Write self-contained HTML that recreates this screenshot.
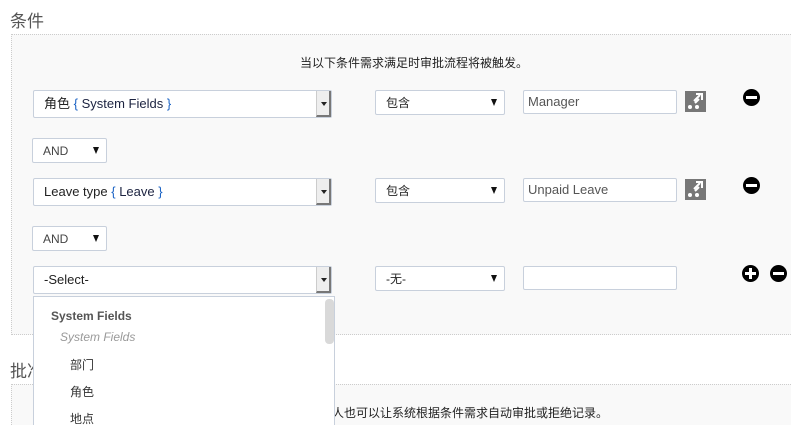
<!DOCTYPE html>
<html><head><meta charset="utf-8"><style>
*{box-sizing:border-box;margin:0;padding:0}
html,body{width:791px;height:425px;overflow:hidden}
body{background:#fff;font-family:"Liberation Sans","Noto Sans CJK SC",sans-serif;font-size:12px;color:#333;position:relative}
.a{position:absolute}
.h{font-size:17px;color:#555}
.panel{border:1px dotted #ccc;background:#f9f9f9;border-right:none}
.sel{background:#fff;border:1px solid #c8d0dc;border-radius:2px;font-size:12px;line-height:24px;padding-left:10px;color:#222}
.big{height:28px;line-height:26px;font-size:13px}
.btn{position:absolute;right:0;top:0;bottom:0;width:15px;background:#eee;border-left:1px solid #ccc;border-right:2px solid #777;border-bottom:2px solid #777}
.btn:after{content:"";position:absolute;left:4px;top:11px;border-left:3px solid transparent;border-right:3px solid transparent;border-top:4px solid #222}
.tri:after{content:"";position:absolute;right:7px;top:8px;border-left:3px solid transparent;border-right:3px solid transparent;border-top:7px solid #111}
.inp{background:#fff;border:1px solid #c8d0dc;border-radius:2px;height:24px;line-height:22px;padding-left:4px;font-size:13px;color:#555}
.blue{color:#1a62c4}
.dk{color:#1c2340}
.circ{width:17px;height:17px;border-radius:50%;background:#000}
.circ:before{content:"";position:absolute;left:3px;top:7px;width:11px;height:3px;background:#fff}
.plus:after{content:"";position:absolute;left:7px;top:3px;width:3px;height:11px;background:#fff}
</style></head><body>
<div class="a h" style="left:10px;top:7px">条件</div>
<div class="a panel" style="left:11px;top:34px;width:790px;height:301px"></div>
<div class="a" style="left:300px;top:54px;font-size:12px;color:#222">当以下条件需求满足时审批流程将被触发。</div>

<div class="a sel big" style="left:33px;top:90px;width:299px">角色 <span class="blue">{ <span class="dk">System Fields</span> }</span><div class="btn"></div></div>
<div class="a sel tri" style="left:375px;top:90px;width:130px;height:25px">包含</div>
<div class="a inp" style="left:523px;top:90px;width:154px">Manager</div>
<svg class="a" style="left:685px;top:91px" width="21" height="21" viewBox="0 0 21 21"><rect width="21" height="21" fill="#777"/><circle cx="5" cy="16" r="2" fill="#fff"/><circle cx="12" cy="16" r="2" fill="#fff"/><path d="M9 10 L15 4 M11 3 H17 V9 M14 8 L10 12" stroke="#fff" stroke-width="2" fill="none"/></svg>
<div class="a circ" style="left:743px;top:89px"></div>

<div class="a sel tri" style="left:32px;top:138px;width:75px;height:25px;color:#444">AND</div>

<div class="a sel big" style="left:33px;top:178px;width:299px">Leave type <span class="blue">{ <span class="dk">Leave</span> }</span><div class="btn"></div></div>
<div class="a sel tri" style="left:375px;top:178px;width:130px;height:25px">包含</div>
<div class="a inp" style="left:523px;top:178px;width:154px">Unpaid Leave</div>
<svg class="a" style="left:685px;top:179px" width="21" height="21" viewBox="0 0 21 21"><rect width="21" height="21" fill="#777"/><circle cx="5" cy="16" r="2" fill="#fff"/><circle cx="12" cy="16" r="2" fill="#fff"/><path d="M9 10 L15 4 M11 3 H17 V9 M14 8 L10 12" stroke="#fff" stroke-width="2" fill="none"/></svg>
<div class="a circ" style="left:743px;top:177px"></div>

<div class="a sel tri" style="left:32px;top:226px;width:75px;height:25px;color:#444">AND</div>

<div class="a sel big" style="left:33px;top:266px;width:299px">-Select-<div class="btn"></div></div>
<div class="a sel tri" style="left:375px;top:266px;width:130px;height:25px">-无-</div>
<div class="a inp" style="left:523px;top:266px;width:154px"></div>
<div class="a circ plus" style="left:742px;top:265px"></div>
<div class="a circ" style="left:770px;top:265px"></div>

<div class="a h" style="left:10px;top:357px">批准</div>
<div class="a panel" style="left:11px;top:384px;width:790px;height:41px;border-bottom:none"></div>
<div class="a" style="left:200px;top:404px;color:#222">提交记录时可以选择批准人也可以让系统根据条件需求自动审批或拒绝记录。</div>

<div class="a" style="left:33px;top:296px;width:302px;height:129px;background:#fff;border:1px solid #c8d0dc;border-bottom:none">
  <div class="a" style="left:291px;top:2px;width:9px;height:45px;background:#d9d9d9;border-radius:4px"></div>
  <div class="a" style="left:17px;top:12px;font-weight:bold;color:#555;font-size:12px">System Fields</div>
  <div class="a" style="left:26px;top:33px;font-style:italic;color:#999;font-size:12px">System Fields</div>
  <div class="a" style="left:36px;top:59px;color:#333">部门</div>
  <div class="a" style="left:36px;top:86px;color:#333">角色</div>
  <div class="a" style="left:36px;top:113px;color:#333">地点</div>
</div>
</body></html>
